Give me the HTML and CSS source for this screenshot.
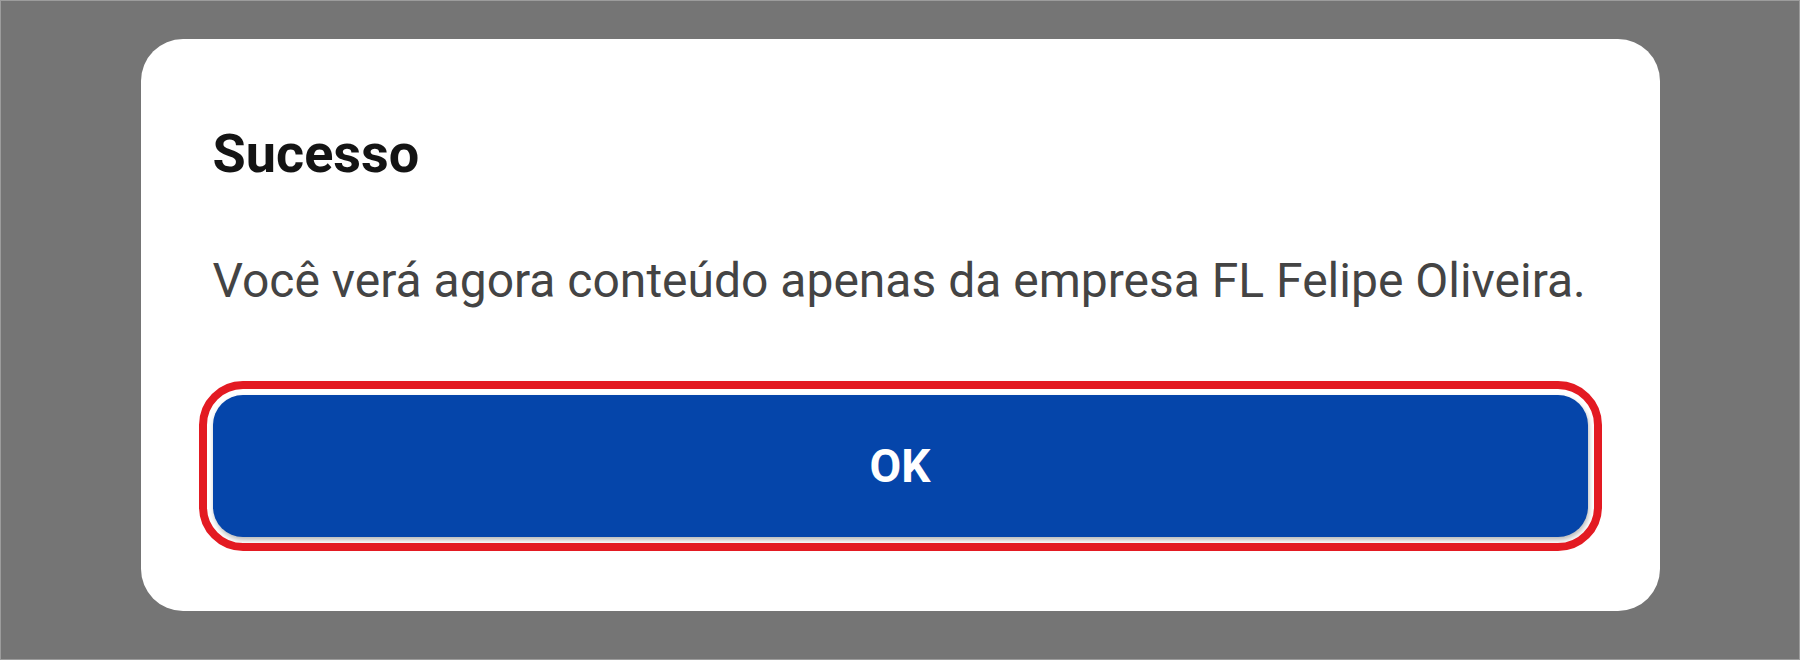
FILE: index.html
```html
<!DOCTYPE html>
<html lang="pt-BR">
<head>
<meta charset="utf-8">
<title>Sucesso</title>
<link rel="stylesheet" href="styles.css">
</head>
<body>
<div class="screen">
  <div class="dialog" role="dialog" aria-labelledby="dlg-title">
    <h2 class="dialog-title" id="dlg-title">Sucesso</h2>
    <p class="dialog-text">Você verá agora conteúdo apenas da empresa FL Felipe Oliveira.</p>
    <button class="dialog-btn" type="button">OK</button>
  </div>
</div>
</body>
</html>
```
FILE: styles.css
```css
html, body {
  margin: 0;
  padding: 0;
}
body {
  background: #757575;
  font-family: Roboto, "Liberation Sans", Arial, sans-serif;
}
.screen {
  box-sizing: border-box;
  width: 1800px;
  height: 660px;
  border: 1px solid #9c9c9c;
  padding-top: 38px;
  background: #757575;
}
.dialog {
  box-sizing: border-box;
  width: 1519px;
  height: 572px;
  margin: 0 auto;
  background: #ffffff;
  border-radius: 42px;
  padding: 83px 72px 74px;
  display: flex;
  flex-direction: column;
}
.dialog-title {
  margin: 0;
  font-size: 54px;
  line-height: 64px;
  font-weight: 700;
  color: #141414;
}
.dialog-text {
  margin: 67px 0 0;
  font-size: 48px;
  line-height: 56px;
  font-weight: 400;
  color: #444444;
}
.dialog-btn {
  margin-top: 86px;
  width: 100%;
  height: 143px;
  border: none;
  border-radius: 30px;
  background: #0545aa;
  color: #ffffff;
  font-family: Roboto, "Liberation Sans", Arial, sans-serif;
  font-size: 46px;
  font-weight: 700;
  box-shadow: 1px 3px 5px rgba(0, 0, 0, 0.28);
  outline: 8px solid #e31a22;
  outline-offset: 6px;
  cursor: pointer;
}
```
